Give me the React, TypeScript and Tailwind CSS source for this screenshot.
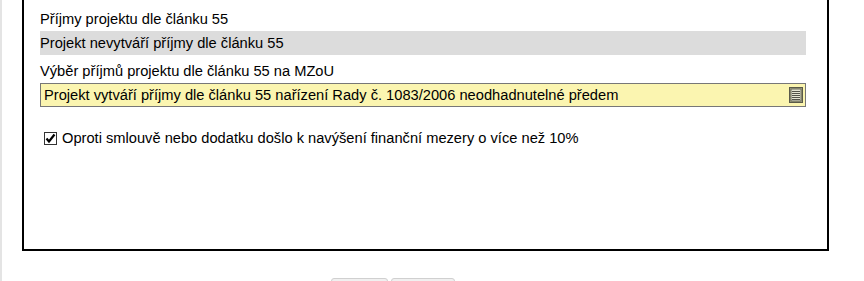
import React from "react";

function ListIcon() {
  return (
    <svg width="14" height="16" viewBox="0 0 14 16" className="block">
      <rect x="0.5" y="0.5" width="13" height="15" fill="#a3a383" stroke="#5a5a4a" />
      <rect x="2" y="2" width="10" height="12" fill="#e6e6d2" stroke="#6a6a5a" strokeWidth="1" />
      <rect x="3" y="4" width="8" height="1" fill="#55554a" />
      <rect x="3" y="6" width="8" height="1" fill="#55554a" />
      <rect x="3" y="8" width="8" height="1" fill="#55554a" />
      <rect x="3" y="10" width="8" height="1" fill="#55554a" />
      <rect x="3" y="12" width="8" height="1" fill="#55554a" />
    </svg>
  );
}

function CheckBox() {
  return (
    <span className="relative inline-flex h-[13px] w-[13px] shrink-0 items-center justify-center border border-[#333] bg-white">
      <svg width="11" height="11" viewBox="0 0 11 11" className="block">
        <path d="M1.5 5.5 L4 8.5 L9.5 1.5" fill="none" stroke="#000" strokeWidth="2.2" />
      </svg>
    </span>
  );
}

export default function App() {
  return (
    <div
      className="flex h-[281px] w-[864px] overflow-hidden bg-white text-black"
      style={{ fontFamily: '"Liberation Sans", Arial, sans-serif' }}
    >
      <div className="w-[2px] shrink-0 bg-[#e4e4e4]" />
      <div className="flex flex-col">
        <div className="ml-[20px] flex h-[251px] w-[807px] shrink-0 flex-col border-x-2 border-b-2 border-black pl-[16px] pr-[21px] text-[14.67px]">
          <div className="mt-[9px] leading-[20px]">Příjmy projektu dle článku 55</div>
          <div className="mt-[2px] flex h-[24px] items-center bg-[#dcdcdc]">
            Projekt nevytváří příjmy dle článku 55
          </div>
          <div className="mt-[6px] leading-[20px]">Výběr příjmů projektu dle článku 55 na MZoU</div>
          <div className="mt-[2px] flex h-[24px] items-center justify-between border border-[#777] bg-[#fbf5b0] pl-[3px] pr-[2px]">
            <span>Projekt vytváří příjmy dle článku 55 nařízení Rady č. 1083/2006 neodhadnutelné předem</span>
            <ListIcon />
          </div>
          <div className="mt-[20px] flex items-center gap-[5px] pl-[4px]">
            <CheckBox />
            <span>Oproti smlouvě nebo dodatku došlo k navýšení finanční mezery o více než 10%</span>
          </div>
        </div>
        <div className="mt-[27px] flex shrink-0 gap-[3px] pl-[329px]">
          <div className="h-[10px] w-[57px] rounded-t-[3px] border border-[#d0d0d0] bg-[#f0f0f0]" />
          <div className="h-[10px] w-[64px] rounded-t-[3px] border border-[#d0d0d0] bg-[#f0f0f0]" />
        </div>
      </div>
    </div>
  );
}
